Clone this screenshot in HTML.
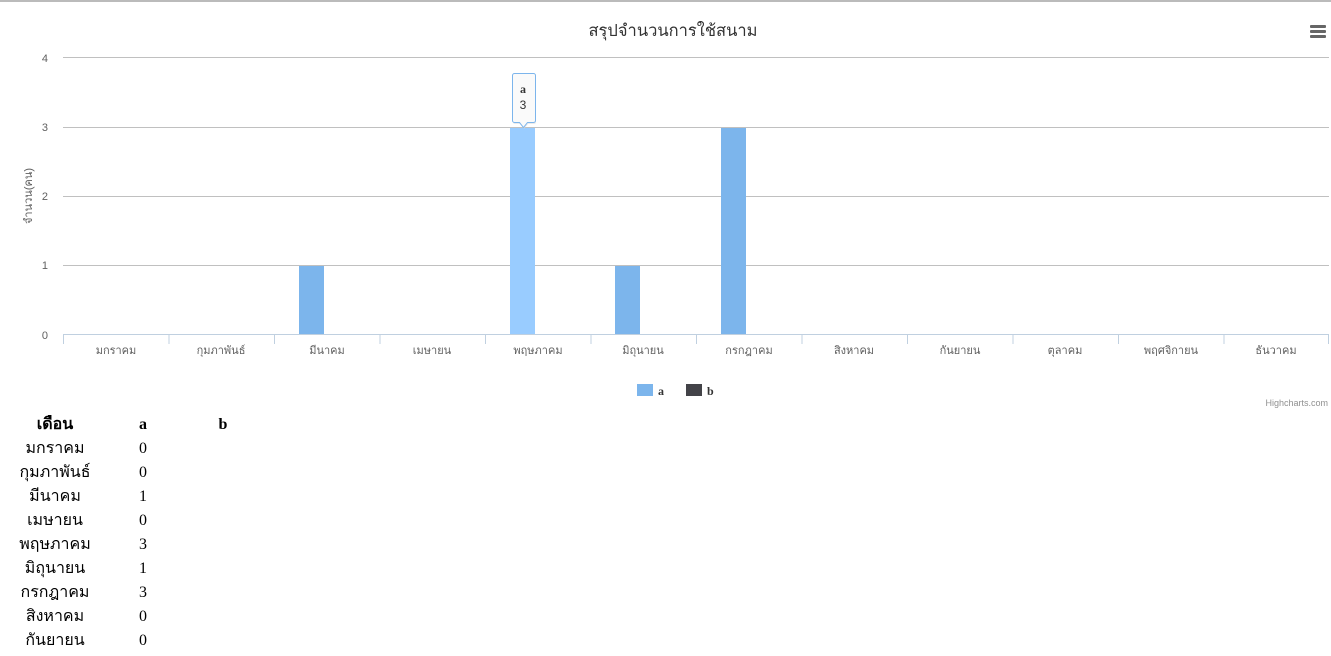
<!DOCTYPE html><html><head><meta charset="utf-8"><style>
body{margin:0;width:1331px;height:656px;overflow:hidden;background:#fff;font-family:"Liberation Serif",serif}
.top{position:absolute;left:0;top:0;width:1331px;height:2px;background:#bbb}
svg{position:absolute;left:0;top:0}
.tbl{position:absolute;left:12px;top:413px;font-size:16px}
.r{display:flex;height:24px;line-height:24px;overflow:visible}
.r div{text-align:center;white-space:nowrap}
.c1{width:86px}.c2{width:90px}.c3{width:70px}
.h{font-weight:bold}
</style></head><body>
<div class="top"></div>
<svg width="1331" height="410" font-family="Liberation Sans, DejaVu Sans, sans-serif">
<text x="673" y="36" font-size="16.5" fill="#333" text-anchor="middle">สรุปจำนวนการใช้สนาม</text>
<g fill="#666"><rect x="1310" y="25" width="16" height="3" rx="1"/><rect x="1310" y="30" width="16" height="3" rx="1"/><rect x="1310" y="35" width="16" height="3" rx="1"/></g>
<g stroke="#c0c0c0" stroke-width="1"><line x1="63" x2="1329" y1="57.5" y2="57.5"/><line x1="63" x2="1329" y1="127.5" y2="127.5"/><line x1="63" x2="1329" y1="196.5" y2="196.5"/><line x1="63" x2="1329" y1="265.5" y2="265.5"/></g>
<g font-size="11" fill="#606060" text-anchor="end"><text x="48" y="62">4</text><text x="48" y="131">3</text><text x="48" y="200">2</text><text x="48" y="269">1</text><text x="48" y="339">0</text></g>
<text transform="translate(32,196) rotate(-90)" font-size="11" fill="#606060" text-anchor="middle">จำนวน(คน)</text>
<g fill="#7cb5ec"><rect x="299" y="266" width="25" height="69"/><rect x="615" y="266" width="25" height="69"/><rect x="721" y="128" width="25" height="207"/></g>
<rect x="510" y="128" width="25" height="207" fill="#99ccff"/>
<g stroke="#c0d0e0"><line x1="63" x2="1329" y1="334.5" y2="334.5"/>
<line x1="63.5" x2="63.5" y1="335" y2="344"/><line x1="169" x2="169" y1="335" y2="344"/><line x1="274.5" x2="274.5" y1="335" y2="344"/><line x1="380" x2="380" y1="335" y2="344"/><line x1="485.5" x2="485.5" y1="335" y2="344"/><line x1="591" x2="591" y1="335" y2="344"/><line x1="696.5" x2="696.5" y1="335" y2="344"/><line x1="802" x2="802" y1="335" y2="344"/><line x1="907.5" x2="907.5" y1="335" y2="344"/><line x1="1013" x2="1013" y1="335" y2="344"/><line x1="1118.5" x2="1118.5" y1="335" y2="344"/><line x1="1224" x2="1224" y1="335" y2="344"/><line x1="1328.5" x2="1328.5" y1="335" y2="344"/></g>
<g font-size="11" fill="#606060" text-anchor="middle">
<text x="116" y="354">มกราคม</text><text x="221" y="354">กุมภาพันธ์</text><text x="327" y="354">มีนาคม</text><text x="432" y="354">เมษายน</text><text x="538" y="354">พฤษภาคม</text><text x="643" y="354">มิถุนายน</text><text x="749" y="354">กรกฎาคม</text><text x="854" y="354">สิงหาคม</text><text x="960" y="354">กันยายน</text><text x="1065" y="354">ตุลาคม</text><text x="1171" y="354">พฤศจิกายน</text><text x="1276" y="354">ธันวาคม</text></g>
<path d="M515,75 h19 a2,2 0 0 1 2,2 v45 a2,2 0 0 1 -2,2 h-6 l-4,5 l-4,-5 h-5 a2,2 0 0 1 -2,-2 v-45 a2,2 0 0 1 2,-2z" fill="#ddd" opacity="0.6"/>
<path d="M514.5,73.5 h19 a2,2 0 0 1 2,2 v45 a2,2 0 0 1 -2,2 h-6 l-4,5 l-4,-5 h-5 a2,2 0 0 1 -2,-2 v-45 a2,2 0 0 1 2,-2z" fill="#fafafa" stroke="#7cb5ec" stroke-width="1"/>
<text x="523" y="93" font-size="12" font-weight="bold" fill="#333" text-anchor="middle" font-family="Liberation Serif">a</text>
<text x="523" y="109" font-size="12" fill="#333" text-anchor="middle">3</text>
<rect x="637" y="384" width="16" height="12" fill="#7cb5ec"/><text x="658" y="395" font-size="12" font-weight="bold" fill="#333" font-family="Liberation Serif">a</text>
<rect x="686" y="384" width="16" height="12" fill="#434348"/><text x="707" y="395" font-size="12" font-weight="bold" fill="#333" font-family="Liberation Serif">b</text>
<text x="1328" y="406" font-size="9" fill="#909090" text-anchor="end">Highcharts.com</text>
</svg>
<div class="tbl">
<div class="r h"><div class="c1">เดือน</div><div class="c2">a</div><div class="c3">b</div></div>
<div class="r"><div class="c1">มกราคม</div><div class="c2">0</div></div>
<div class="r"><div class="c1">กุมภาพันธ์</div><div class="c2">0</div></div>
<div class="r"><div class="c1">มีนาคม</div><div class="c2">1</div></div>
<div class="r"><div class="c1">เมษายน</div><div class="c2">0</div></div>
<div class="r"><div class="c1">พฤษภาคม</div><div class="c2">3</div></div>
<div class="r"><div class="c1">มิถุนายน</div><div class="c2">1</div></div>
<div class="r"><div class="c1">กรกฎาคม</div><div class="c2">3</div></div>
<div class="r"><div class="c1">สิงหาคม</div><div class="c2">0</div></div>
<div class="r"><div class="c1">กันยายน</div><div class="c2">0</div></div>
</div>
</body></html>
